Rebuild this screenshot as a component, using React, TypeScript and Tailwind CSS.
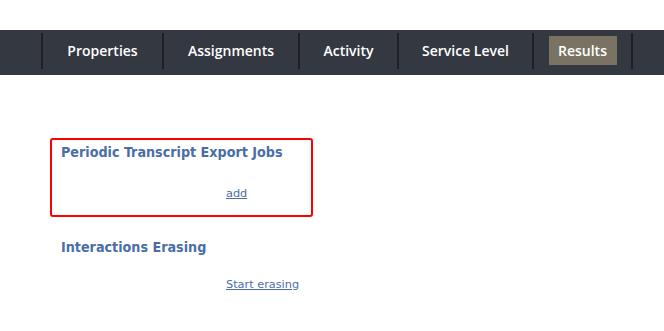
import React from "react";

const items: { label: string; w: string }[] = [
  { label: "Properties", w: "w-[119px]" },
  { label: "Assignments", w: "w-[134px]" },
  { label: "Activity", w: "w-[97px]" },
  { label: "Service Level", w: "w-[133px]" },
  { label: "Results", w: "w-[97px]" },
];

const heading = { fontFamily: "'DejaVu Sans Condensed', 'DejaVu Sans', sans-serif", fontStretch: "condensed" as const };
const link = { fontFamily: "'DejaVu Sans', sans-serif" };

export default function App() {
  return (
    <div className="w-[664px] h-[331px] bg-white overflow-hidden" style={{ fontFamily: "'Open Sans', sans-serif" }}>
      <div className="h-[30px]" />
      <div className="h-[45px] bg-[#343841] flex items-start pl-[41px]">
        {items.map((it, i) => (
          <div key={it.label} className="flex items-start">
            <div className="w-[2px] h-[36px] mt-[3px] bg-[#1d1f25]" />
            {it.label === "Results" ? (
              <div className={`${it.w} pt-[6px] flex justify-center`}>
                <div className="bg-[#7a7363] w-[68px] h-[29px] flex items-center justify-center text-white text-[14px] font-semibold">{it.label}</div>
              </div>
            ) : (
              <div className={`${it.w} h-[40px] flex items-center justify-center text-white text-[14px] font-semibold`}>{it.label}</div>
            )}
            {i === items.length - 1 && <div className="w-[2px] h-[36px] mt-[3px] bg-[#1d1f25]" />}
          </div>
        ))}
      </div>
      <div className="pl-[50px] pt-[63px]">
        <div className="w-[263px] h-[79px] border-2 border-[#ff0000] rounded-[3px] pl-[9px] pt-[2px]">
          <div className="text-[#4a6ea6] text-[14.2px] font-bold leading-[20px]" style={heading}>
            Periodic Transcript Export Jobs
          </div>
          <div className="pl-[165px] pt-[21px] leading-[16px]">
            <a href="#" className="text-[#4a6ea6] text-[11.3px] underline" style={link}>add</a>
          </div>
        </div>
        <div className="pl-[11px] pt-[20px]">
          <div className="text-[#4a6ea6] text-[14.2px] font-bold leading-[20px]" style={heading}>
            Interactions Erasing
          </div>
          <div className="pl-[165px] pt-[17px] leading-[16px]">
            <a href="#" className="text-[#4a6ea6] text-[11.3px] underline" style={link}>Start erasing</a>
          </div>
        </div>
      </div>
    </div>
  );
}
